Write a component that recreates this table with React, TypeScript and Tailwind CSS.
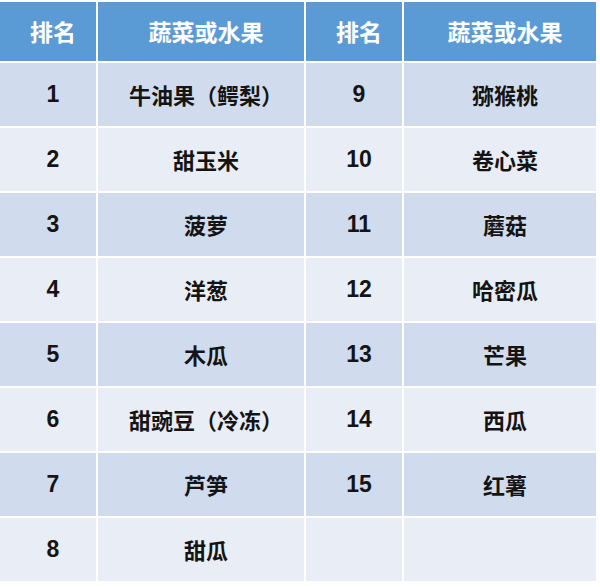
import React from "react";

const left = [
  ["1", "牛油果（鳄梨）"],
  ["2", "甜玉米"],
  ["3", "菠萝"],
  ["4", "洋葱"],
  ["5", "木瓜"],
  ["6", "甜豌豆（冷冻）"],
  ["7", "芦笋"],
  ["8", "甜瓜"],
];
const right = [
  ["9", "猕猴桃"],
  ["10", "卷心菜"],
  ["11", "蘑菇"],
  ["12", "哈密瓜"],
  ["13", "芒果"],
  ["14", "西瓜"],
  ["15", "红薯"],
  ["", ""],
];

const font = {
  fontFamily: '"Noto Sans CJK SC", "Liberation Sans", sans-serif',
};
const numFont = { fontFamily: '"Liberation Sans", sans-serif' };

export default function App() {
  return (
    <div className="w-[600px] h-[587px] bg-white pt-[2px]" style={font}>
      <div className="grid w-[596px] grid-cols-[96px_206px_96px_192px] gap-[2px] bg-white">
        {["排名", "蔬菜或水果", "排名", "蔬菜或水果"].map((h, i) => (
          <div
            key={i}
            className="h-[59px] bg-[#5b9bd5] flex items-center justify-center pl-[10px] text-white font-bold text-[23px]"
          >
            {h}
          </div>
        ))}
        {left.map((l, i) => {
          const r = right[i];
          const bg = i % 2 === 0 ? "bg-[#d0dcee]" : "bg-[#e9edf6]";
          return (
            <React.Fragment key={i}>
              <div className={`h-[63px] ${bg} flex items-center justify-center pl-[10px] font-bold text-[23px] text-[#141414]`}>
                <span style={numFont}>{l[0]}</span>
              </div>
              <div className={`h-[63px] ${bg} flex items-center justify-center pl-[10px] font-bold text-[22px] text-[#141414]`}>
                {l[1]}
              </div>
              <div className={`h-[63px] ${bg} flex items-center justify-center pl-[10px] font-bold text-[23px] text-[#141414]`}>
                <span style={numFont}>{r[0]}</span>
              </div>
              <div className={`h-[63px] ${bg} flex items-center justify-center pl-[10px] font-bold text-[22px] text-[#141414]`}>
                {r[1]}
              </div>
            </React.Fragment>
          );
        })}
      </div>
    </div>
  );
}
